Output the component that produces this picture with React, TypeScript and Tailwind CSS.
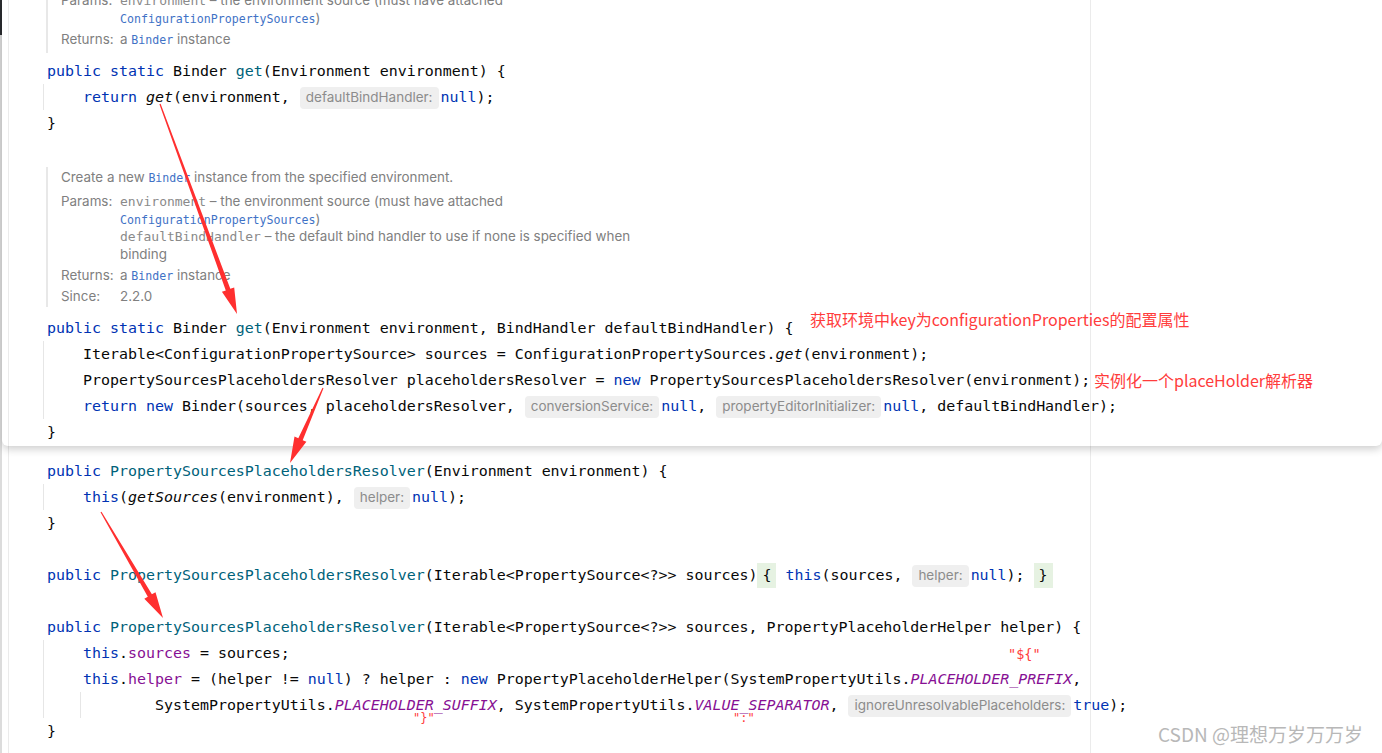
import React from 'react';

type Kind = 'p' | 'k' | 'm' | 'i' | 'f' | 'c' | 'h' | 'g';
type Tok = [Kind, string];

const tokClass: Record<Kind, string> = {
  p: 'text-[#080808]',
  k: 'text-[#0033b3]',
  m: 'text-[#00627a]',
  i: 'italic text-[#080808]',
  f: 'text-[#871094]',
  c: 'italic text-[#871094]',
  h: "ml-px mr-[2px] flex h-[22px] items-center rounded-[4px] bg-[#efefef] px-[6px] font-['Inter',sans-serif] text-[13.5px] text-[#8c8c8c]",
  g: 'flex items-center self-stretch bg-[#e6f2e2] px-[5px] text-[#080808]',
};

function CodeLine({ toks = [] }: { toks?: Tok[] }) {
  return (
    <div className="flex h-[26px] items-center whitespace-pre pt-px">
      {toks.map(([k, t], i) => (
        <span key={i} className={tokClass[k]}>
          {t}
        </span>
      ))}
    </div>
  );
}

// method header / closing brace sit at x=47
const Head = ({ toks }: { toks: Tok[] }) => (
  <div className="pl-[38px]">
    <CodeLine toks={toks} />
  </div>
);

// body lines with the indent guide at x=43
const Body = ({ children }: { children: React.ReactNode }) => (
  <div className="ml-[34px] border-l border-[#e6e6e6] pl-[3px]">{children}</div>
);

const DocLink = ({ children }: { children: React.ReactNode }) => (
  <span className="font-['DejaVu_Sans_Mono',monospace] text-[11.6px] text-[#3f72c6]">{children}</span>
);

const DocParam = ({ children }: { children: React.ReactNode }) => (
  <span className="font-['DejaVu_Sans_Mono',monospace] text-[13px] text-[#8a8a8a]">{children}</span>
);

const DocLine = ({ children }: { children: React.ReactNode }) => (
  <div className="h-[17.5px] whitespace-pre leading-[17.5px]">{children}</div>
);

const DocRow = ({ label, children, className = '' }: { label: string; children: React.ReactNode; className?: string }) => (
  <div className={'flex ' + className}>
    <div className="h-[17.5px] w-[59px] shrink-0 leading-[17.5px]">{label}</div>
    <div className="flex flex-col">{children}</div>
  </div>
);

const DocBlock = ({ children, className = '' }: { children: React.ReactNode; className?: string }) => (
  <div
    className={
      "ml-[37px] flex flex-col border-l-2 border-[#e8e8e8] pl-[13px] font-['Inter',sans-serif] text-[13.4px] text-[#808080] " +
      className
    }
  >
    {children}
  </div>
);

function arrow(x1: number, y1: number, x2: number, y2: number) {
  const len = Math.hypot(x2 - x1, y2 - y1);
  const ux = (x2 - x1) / len;
  const uy = (y2 - y1) / len;
  const nx = -uy;
  const ny = ux;
  const head = 26;
  const hw = 6.5;
  const w0 = 0.6;
  const w1 = 2.4;
  const bx = x2 - ux * head;
  const by = y2 - uy * head;
  const pts = [
    [x1 + nx * w0, y1 + ny * w0],
    [bx + nx * w1, by + ny * w1],
    [bx + nx * hw, by + ny * hw],
    [x2, y2],
    [bx - nx * hw, by - ny * hw],
    [bx - nx * w1, by - ny * w1],
    [x1 - nx * w0, y1 - ny * w0],
  ];
  return pts.map((p) => p.map((v) => v.toFixed(1)).join(',')).join(' ');
}

const ARROWS: [number, number, number, number][] = [
  [160, 104, 237, 314],
  [323, 388, 290, 463],
  [101, 512, 163, 618],
];

export default function App() {
  return (
    <div className="relative flex h-[753px] w-[1382px] overflow-hidden bg-white font-['DejaVu_Sans_Mono',monospace] text-[14.95px]">
      {/* left window edge */}
      <div className="flex w-[2px] flex-col">
        <div className="h-[35px] bg-[#2b2d30]" />
        <div className="flex-1 bg-[#dcdcdc]" />
      </div>

      <div className="flex min-w-0 flex-1 flex-col">
        {/* quick definition popup */}
        <div className="relative z-10 flex h-[446px] overflow-hidden rounded-b-[6px] bg-white shadow-[0_3px_8px_rgba(0,0,0,0.2)]">
          <div className="ml-[6px] w-px bg-[#ebebeb]" />
          <div className="absolute bottom-0 left-[1088px] top-0 w-px bg-[#ebebeb]" />
          <div className="relative -mt-[8px] flex flex-1 flex-col">
            <DocBlock className="pb-[5px]">
              <DocRow label="Params:">
                <DocLine>
                  <DocParam>environment</DocParam> – the environment source (must have attached
                </DocLine>
                <DocLine>
                  <DocLink>ConfigurationPropertySources</DocLink>)
                </DocLine>
              </DocRow>
              <DocRow label="Returns:" className="mt-[3.5px]">
                <DocLine>
                  a <DocLink>Binder</DocLink> instance
                </DocLine>
              </DocRow>
            </DocBlock>

            <div className="mt-[5px]">
              <Head toks={[['k', 'public static '], ['p', 'Binder '], ['m', 'get'], ['p', '(Environment environment) {']]} />
              <Body>
                <CodeLine
                  toks={[['p', '    '], ['k', 'return '], ['i', 'get'], ['p', '(environment, '], ['h', 'defaultBindHandler:'], ['k', 'null'], ['p', ');']]}
                />
              </Body>
              <Head toks={[['p', '}']]} />
            </div>

            <DocBlock className="mt-[31px] pb-[2px] pt-[2px]">
              <DocLine>
                Create a new <DocLink>Binder</DocLink> instance from the specified environment.
              </DocLine>
              <DocRow label="Params:" className="mt-[6.5px]">
                <DocLine>
                  <DocParam>environment</DocParam> – the environment source (must have attached
                </DocLine>
                <DocLine>
                  <DocLink>ConfigurationPropertySources</DocLink>)
                </DocLine>
                <DocLine>
                  <DocParam>defaultBindHandler</DocParam> – the default bind handler to use if none is specified when
                </DocLine>
                <DocLine>binding</DocLine>
              </DocRow>
              <DocRow label="Returns:" className="mt-[3.5px]">
                <DocLine>
                  a <DocLink>Binder</DocLink> instance
                </DocLine>
              </DocRow>
              <DocRow label="Since:" className="mt-[3.5px]">
                <DocLine>2.2.0</DocLine>
              </DocRow>
            </DocBlock>

            <div className="mt-[8px]">
              <Head
                toks={[['k', 'public static '], ['p', 'Binder '], ['m', 'get'], ['p', '(Environment environment, BindHandler defaultBindHandler) {']]}
              />
              <Body>
                <CodeLine toks={[['p', '    Iterable<ConfigurationPropertySource> sources = ConfigurationPropertySources.'], ['i', 'get'], ['p', '(environment);']]} />
                <CodeLine
                  toks={[['p', '    PropertySourcesPlaceholdersResolver placeholdersResolver = '], ['k', 'new '], ['p', 'PropertySourcesPlaceholdersResolver(environment);']]}
                />
                <CodeLine
                  toks={[
                    ['p', '    '],
                    ['k', 'return new '],
                    ['p', 'Binder(sources, placeholdersResolver, '],
                    ['h', 'conversionService:'],
                    ['k', 'null'],
                    ['p', ', '],
                    ['h', 'propertyEditorInitializer:'],
                    ['k', 'null'],
                    ['p', ', defaultBindHandler);'],
                  ]}
                />
              </Body>
              <Head toks={[['p', '}']]} />
            </div>
          </div>
        </div>

        {/* editor below the popup */}
        <div className="relative flex flex-1">
          <div className="ml-[6px] w-px bg-[#ebebeb]" />
          <div className="absolute bottom-0 left-[1088px] top-0 w-px bg-[#ebebeb]" />
          <div className="relative flex flex-1 flex-col pt-[12px]">
            <Head toks={[['k', 'public '], ['m', 'PropertySourcesPlaceholdersResolver'], ['p', '(Environment environment) {']]} />
            <Body>
              <CodeLine toks={[['p', '    '], ['k', 'this'], ['p', '('], ['i', 'getSources'], ['p', '(environment), '], ['h', 'helper:'], ['k', 'null'], ['p', ');']]} />
            </Body>
            <Head toks={[['p', '}']]} />
            <CodeLine />
            <Head
              toks={[
                ['k', 'public '],
                ['m', 'PropertySourcesPlaceholdersResolver'],
                ['p', '(Iterable<PropertySource<?>> sources)'],
                ['g', '{'],
                ['p', ' '],
                ['k', 'this'],
                ['p', '(sources, '],
                ['h', 'helper:'],
                ['k', 'null'],
                ['p', '); '],
                ['g', '}'],
              ]}
            />
            <CodeLine />
            <Head
              toks={[['k', 'public '], ['m', 'PropertySourcesPlaceholdersResolver'], ['p', '(Iterable<PropertySource<?>> sources, PropertyPlaceholderHelper helper) {']]}
            />
            <Body>
              <CodeLine toks={[['p', '    '], ['k', 'this'], ['p', '.'], ['f', 'sources'], ['p', ' = sources;']]} />
              <CodeLine
                toks={[
                  ['p', '    '],
                  ['k', 'this'],
                  ['p', '.'],
                  ['f', 'helper'],
                  ['p', ' = (helper != '],
                  ['k', 'null'],
                  ['p', ') ? helper : '],
                  ['k', 'new '],
                  ['p', 'PropertyPlaceholderHelper(SystemPropertyUtils.'],
                  ['c', 'PLACEHOLDER_PREFIX'],
                  ['p', ','],
                ]}
              />
              <div className="ml-[33px] border-l border-[#e6e6e6] pl-[2px]">
                <CodeLine
                  toks={[
                    ['p', '        SystemPropertyUtils.'],
                    ['c', 'PLACEHOLDER_SUFFIX'],
                    ['p', ', SystemPropertyUtils.'],
                    ['c', 'VALUE_SEPARATOR'],
                    ['p', ', '],
                    ['h', 'ignoreUnresolvablePlaceholders:'],
                    ['k', 'true'],
                    ['p', ');'],
                  ]}
                />
              </div>
            </Body>
            <Head toks={[['p', '}']]} />
          </div>
        </div>
      </div>

      {/* hand-drawn annotations on top of the screenshot */}
      <svg className="pointer-events-none absolute inset-0 z-20" width="1382" height="753">
        {ARROWS.map((a, i) => (
          <polygon key={i} points={arrow(...a)} fill="#ff2f2f" />
        ))}
      </svg>
      <div className="absolute left-[810px] top-[309px] z-20 font-['Noto_Sans_CJK_SC',sans-serif] text-[16px] leading-[20px] text-[#ff3c3c]">
        获取环境中key为configurationProperties的配置属性
      </div>
      <div className="absolute left-[1094px] top-[370px] z-20 font-['Noto_Sans_CJK_SC',sans-serif] text-[16px] leading-[20px] text-[#ff3c3c]">
        实例化一个placeHolder解析器
      </div>
      <span className="absolute left-[1008px] top-[646px] z-20 text-[13.5px] leading-[16px] text-[#ff3c3c]">{'"${"'}</span>
      <span className="absolute left-[413px] top-[711px] z-20 text-[12px] leading-[14px] text-[#ff3c3c]">{'"}"'}</span>
      <span className="absolute left-[733px] top-[711px] z-20 text-[12px] leading-[14px] text-[#ff3c3c]">{'":"'}</span>
      <div className="absolute left-[1158px] top-[722px] z-20 font-['Noto_Sans_CJK_SC',sans-serif] text-[19px] leading-[24px] text-[#b8b8b8]">
        CSDN @理想万岁万万岁
      </div>
    </div>
  );
}
